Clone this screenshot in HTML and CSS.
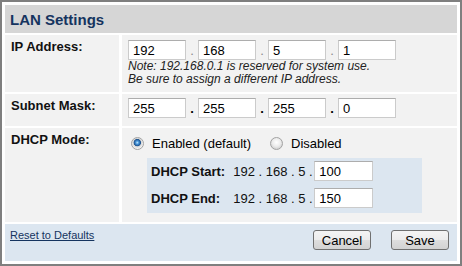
FILE: index.html
```html
<!DOCTYPE html>
<html lang="en">
<head>
    <meta charset="UTF-8">
    <title>LAN Settings</title>
    <link rel="stylesheet" href="styles.css">
</head>
<body>

    <div class="panel">
        <div class="form">
            <!-- title bar -->
            <div class="head">LAN Settings</div>

            <!-- IP address -->
            <div class="label">IP Address:</div>
            <div class="value">
                <div class="ip">
                    <input class="octet" type="text" value="192">
                    <span class="dot">.</span>
                    <input class="octet" type="text" value="168">
                    <span class="dot">.</span>
                    <input class="octet" type="text" value="5">
                    <span class="dot">.</span>
                    <input class="octet" type="text" value="1">
                </div>
                <p class="note">Note: 192.168.0.1 is reserved for system use.<br>Be sure to assign a different IP address.</p>
            </div>

            <!-- subnet mask -->
            <div class="label">Subnet Mask:</div>
            <div class="value value-short">
                <div class="ip">
                    <input class="octet" type="text" value="255">
                    <span class="dot dot-bold">.</span>
                    <input class="octet" type="text" value="255">
                    <span class="dot dot-bold">.</span>
                    <input class="octet" type="text" value="255">
                    <span class="dot dot-bold">.</span>
                    <input class="octet" type="text" value="0">
                </div>
            </div>

            <!-- DHCP -->
            <div class="label">DHCP Mode:</div>
            <div class="value value-dhcp">
                <div class="radios">
                    <label class="radio"><input type="radio" name="dhcp" checked> Enabled (default)</label>
                    <label class="radio"><input type="radio" name="dhcp"> Disabled</label>
                </div>
                <div class="range">
                    <span class="range-label">DHCP Start:</span>
                    <span class="range-value">192 . 168 . 5 . <input class="octet octet-wide" type="text" value="100"></span>
                    <span class="range-label">DHCP End:</span>
                    <span class="range-value">192 . 168 . 5 . <input class="octet octet-wide" type="text" value="150"></span>
                </div>
            </div>

            <!-- footer -->
            <div class="foot">
                <a href="#" class="reset">Reset to Defaults</a>
                <div class="buttons">
                    <button class="btn">Cancel</button>
                    <button class="btn">Save</button>
                </div>
            </div>
        </div>
    </div>

</body>
</html>
```

FILE: styles.css
```css
body {
    margin: 0;
    padding: 0;
    background-color: #fff;
    font-family: "Liberation Sans", Arial, sans-serif;
    font-size: 13px;
    color: #000;
}
.panel {
    width: 462px;
    height: 266px;
    box-sizing: border-box;
    border: 2px solid #7f7f7f;
    padding: 3px;
    background-color: #fff;
}
.form {
    display: grid;
    grid-template-columns: 114px 1fr;
    column-gap: 3px;
    row-gap: 2px;
}
/* title bar */
.head {
    grid-column: 1 / 3;
    height: 28px;
    display: flex;
    align-items: center;
    padding-left: 5px;
    background-color: #d6d6d6;
    color: #15345f;
    font-size: 15px;
    font-weight: bold;
}
.label {
    background-color: #f2f2f2;
    padding: 4px 6px;
    font-weight: bold;
    line-height: 15px;
    color: #111;
}
.value {
    background-color: #f2f2f2;
    padding: 5px 6px 6px;
}
.value-short {
    padding: 4px 6px 8px;
}
.value-dhcp {
    padding: 6px 6px 9px;
}
/* ip fields */
.ip {
    display: flex;
    align-items: flex-end;
    height: 20px;
}
.octet {
    width: 58px;
    height: 20px;
    box-sizing: border-box;
    margin: 0;
    padding: 0 4px;
    border: 1px solid #cbcbcb;
    border-top-color: #adadad;
    background-color: #fff;
    font-family: "Liberation Sans", Arial, sans-serif;
    font-size: 13px;
    color: #000;
}
.octet-wide {
    width: 59px;
    margin-left: -2px;
}
.dot {
    width: 12px;
    text-align: center;
    line-height: 18px;
    color: #888;
}
.dot-bold {
    font-weight: bold;
    color: #000;
}
.note {
    margin: 0;
    font-size: 12px;
    line-height: 13px;
    font-style: italic;
    color: #222;
}
/* radios */
.radios {
    display: flex;
    align-items: center;
    height: 18px;
    padding-left: 3px;
}
.radio {
    display: flex;
    align-items: center;
    gap: 5px;
    margin-right: 19px;
}
.radio input {
    appearance: none;
    -webkit-appearance: none;
    width: 13px;
    height: 13px;
    margin: 0 3px 0 0;
    border: 1px solid #a2a2a2;
    border-radius: 50%;
    background: radial-gradient(circle at 50% 40%, #ffffff 0, #ececec 4px, #d8d8d8 6px);
}
.radio input:checked {
    background: radial-gradient(circle at 48% 42%, #c4ecff 0, #4a98dc 1.5px, #1d538f 3.3px, #d6d6d6 4px, #f3f3f3 6px);
}
/* dhcp range box */
.range {
    display: grid;
    grid-template-columns: auto 1fr;
    column-gap: 8px;
    row-gap: 7px;
    align-items: center;
    width: 275px;
    box-sizing: border-box;
    margin: 6px 0 0 19px;
    padding: 3px 4px 5px;
    background-color: #dce6f0;
}
.range-label {
    font-weight: bold;
    color: #111;
}
.range-value {
    color: #111;
}
/* footer */
.foot {
    grid-column: 1 / 3;
    height: 37px;
    box-sizing: border-box;
    display: flex;
    justify-content: space-between;
    align-items: flex-start;
    padding: 6px 8px 0 5px;
    background-color: #dce6f0;
}
.reset {
    font-size: 11px;
    line-height: 13px;
    margin-top: -1px;
    color: #15345f;
}
.buttons {
    display: flex;
    gap: 20px;
}
.btn {
    width: 58px;
    height: 20px;
    padding: 0;
    border: 1px solid #707070;
    border-radius: 3px;
    background: linear-gradient(#f4f4f4, #ececec 50%, #dedede 50%, #d2d2d2);
    font-family: "Liberation Sans", Arial, sans-serif;
    font-size: 13px;
    color: #000;
    cursor: pointer;
}
.btn:hover {
    background: linear-gradient(#eaf6fd, #d9f0fc 50%, #bee6fd 50%, #a7d9f5);
}
```
